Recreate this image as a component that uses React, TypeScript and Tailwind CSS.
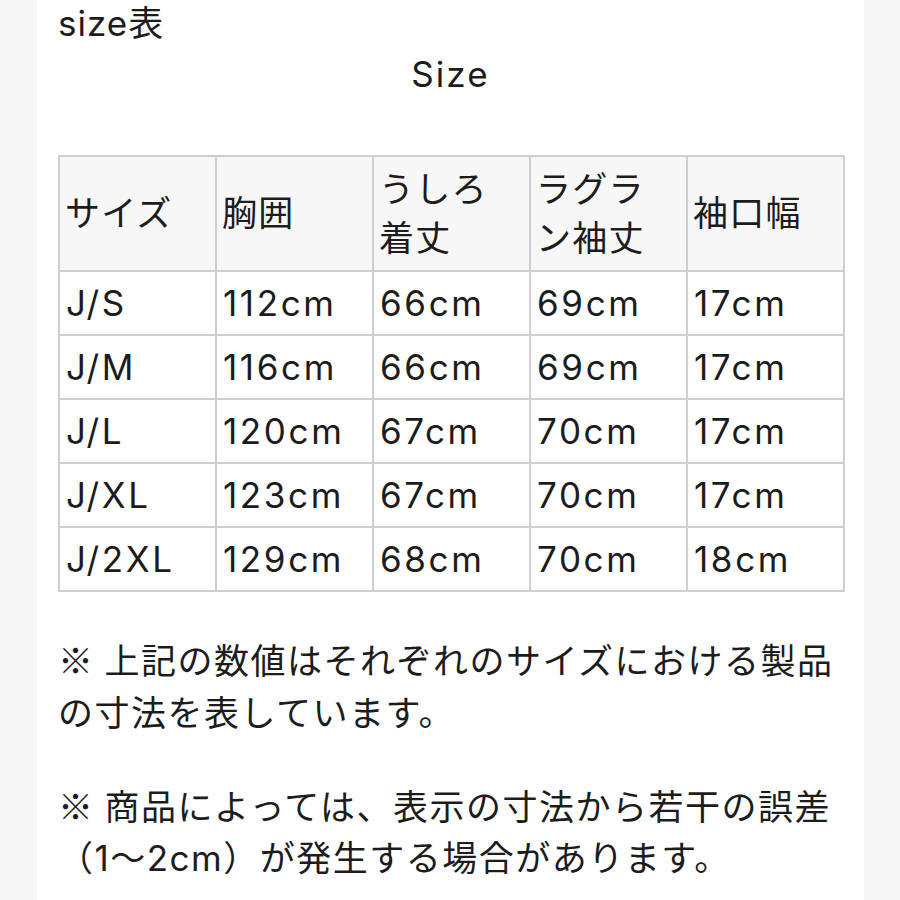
import React from "react";

const rows = [
  ["J/S", "112cm", "66cm", "69cm", "17cm"],
  ["J/M", "116cm", "66cm", "69cm", "17cm"],
  ["J/L", "120cm", "67cm", "70cm", "17cm"],
  ["J/XL", "123cm", "67cm", "70cm", "17cm"],
  ["J/2XL", "129cm", "68cm", "70cm", "18cm"],
];

const headers: string[][] = [
  ["サイズ"],
  ["胸囲"],
  ["うしろ", "着丈"],
  ["ラグラ", "ン袖丈"],
  ["袖口幅"],
];

const cjk = { fontFamily: '"Noto Sans CJK JP", sans-serif' };

export default function App() {
  return (
    <div
      className="min-h-[900px] w-[900px] bg-[#f6f6f6] text-[#1c1c1c] text-[35px]"
      style={{ fontFamily: 'Inter, "Noto Sans CJK JP", sans-serif' }}
    >
      <div className="ml-[37px] w-[827px] min-h-[900px] bg-white pl-[21px] pr-[21px]">
        <div className="leading-[47px] tracking-[1px]">size表</div>
        <div className="mt-[4px] text-center leading-[47px] tracking-[0.06em]">Size</div>

        <div className="mt-[57px] grid w-[787px] grid-cols-[repeat(5,157px)] border-l-2 border-t-2 border-[#cfcfcf]">
          {headers.map((h, i) => (
            <div
              key={i}
              className="flex h-[115px] flex-col justify-center border-b-2 border-r-2 border-[#cfcfcf] bg-[#f7f7f7] pl-[5px] leading-[49px] tracking-[1.2px]"
            >
              {h.map((line, j) => (
                <span key={j} className="whitespace-nowrap">
                  {line}
                </span>
              ))}
            </div>
          ))}
          {rows.map((r, i) =>
            r.map((c, j) => (
              <div
                key={`${i}-${j}`}
                className="flex h-[64px] items-center border-b-2 border-r-2 border-[#cfcfcf] bg-white pl-[6px] leading-[49px] whitespace-nowrap tracking-[0.075em]"
              >
                {c}
              </div>
            ))
          )}
        </div>

        <p className="mt-[41px] w-[785px] leading-[52px] tracking-[1.5px]">
          <span style={cjk} className="mr-[10px]">※</span>上記の数値はそれぞれのサイズにおける製品の寸法を表しています。
        </p>
        <p className="mt-[40px] w-[785px] leading-[51px] tracking-[1.5px]">
          <span style={cjk} className="mr-[10px]">※</span>商品によっては、表示の寸法から若干の誤差（1〜2cm）が発生する場合があります。
        </p>
      </div>
    </div>
  );
}
